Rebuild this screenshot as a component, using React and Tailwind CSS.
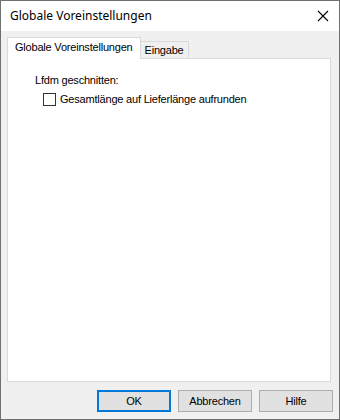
import React from "react";

export default function App() {
  const dlg = { fontFamily: '"Liberation Sans", Arial, sans-serif' };
  return (
    <div className="w-[340px] h-[420px] border border-[#707070] bg-[#f0f0f0] flex flex-col text-black" style={dlg}>
      <div className="h-[30px] bg-white flex items-center justify-between pl-[9px] pr-[9px] shrink-0">
        <span className="text-[12px] leading-none" style={{ fontFamily: '"Noto Sans", "Open Sans", sans-serif' }}>Globale Voreinstellungen</span>
        <svg width="12" height="12" viewBox="0 0 12 12" className="mr-[1px]">
          <path d="M1 1 L11 11 M11 1 L1 11" stroke="#000" strokeWidth="1.1" fill="none" />
        </svg>
      </div>
      <div className="flex flex-col pl-[6px] pr-[8px] pt-[6px] flex-1 tracking-[-0.2px]">
        <div className="flex items-end h-[21px]">
          <div className="relative z-10 h-[22px] -mb-px bg-white border border-b-0 border-[#d9d9d9] px-[7px] text-[11px] leading-[19px]">Globale Voreinstellungen</div>
          <div className="h-[17px] bg-[#f0f0f0] border border-l-0 border-b-0 border-[#d9d9d9] px-[4px] text-[11px] leading-[16px]">Eingabe</div>
        </div>
        <div className="h-[324px] w-[324px] bg-white border border-[#d9d9d9] pl-[27px] pt-[15px] text-[11px]">
          <div className="leading-[13px]">Lfdm geschnitten:</div>
          <div className="flex items-center mt-[6px] ml-[8px]">
            <div className="w-[13px] h-[13px] border border-[#333] bg-white shrink-0" />
            <span className="ml-[4px] leading-[13px]">Gesamtlänge auf Lieferlänge aufrunden</span>
          </div>
        </div>
        <div className="flex justify-end gap-[7px] mt-[8px] mr-[-2px]">
          <button className="w-[74px] h-[22px] border-2 border-[#0078d7] bg-[#e1e1e1] text-[11px] leading-none">OK</button>
          <button className="w-[74px] h-[22px] border border-[#adadad] bg-[#e1e1e1] text-[11px] leading-none">Abbrechen</button>
          <button className="w-[74px] h-[22px] border border-[#adadad] bg-[#e1e1e1] text-[11px] leading-none">Hilfe</button>
        </div>
      </div>
    </div>
  );
}
